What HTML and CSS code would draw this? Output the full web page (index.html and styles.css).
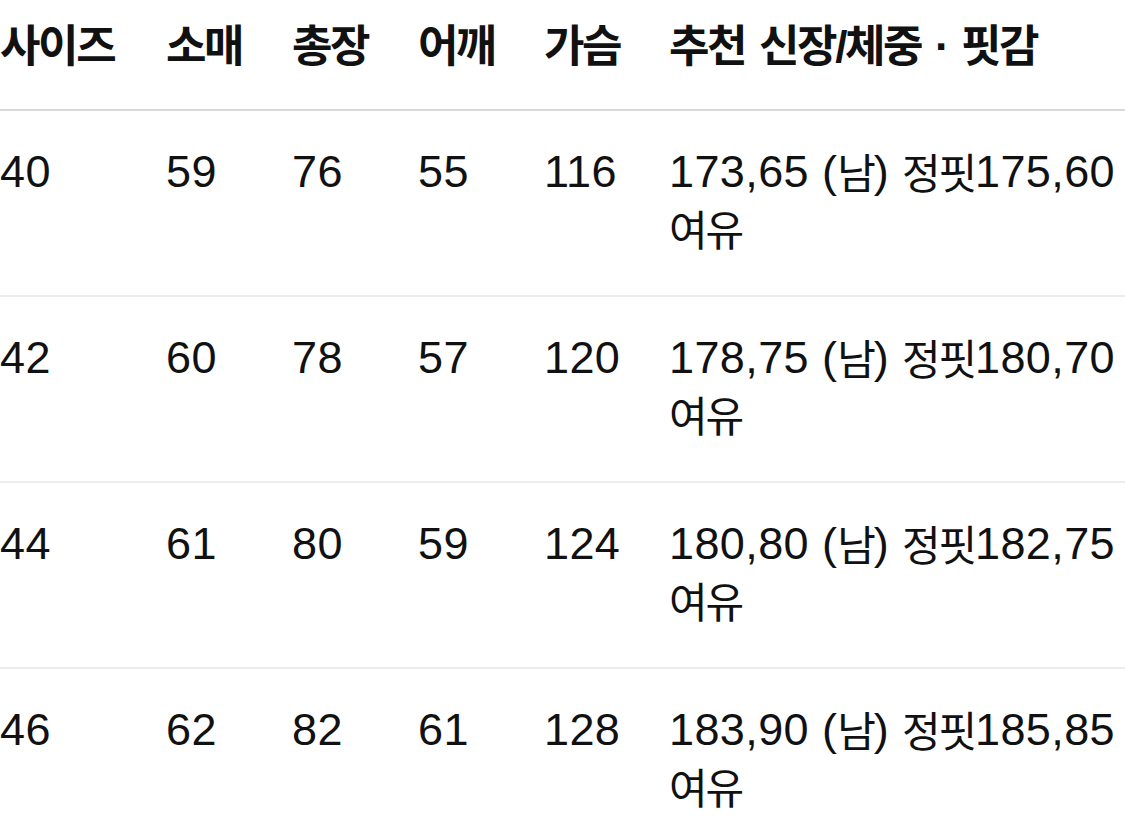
FILE: index.html
```html
<!DOCTYPE html>
<html lang="ko">
<head>
<meta charset="utf-8">
<title>사이즈표</title>
<link rel="stylesheet" href="styles.css">
</head>
<body>
<table class="size-table">
  <colgroup>
    <col class="c-size">
    <col class="c-num">
    <col class="c-num">
    <col class="c-num">
    <col class="c-num2">
    <col class="c-rec">
  </colgroup>
  <thead>
    <tr>
      <th>사이즈</th>
      <th>소매</th>
      <th>총장</th>
      <th>어깨</th>
      <th>가슴</th>
      <th>추천 신장/체중 · 핏감</th>
    </tr>
  </thead>
  <tbody>
    <tr>
      <td>40</td><td>59</td><td>76</td><td>55</td><td>116</td>
      <td>173,65 (<span class="ko">남</span>) <span class="ko">정핏</span>175,60 <span class="ko">여유</span></td>
    </tr>
    <tr>
      <td>42</td><td>60</td><td>78</td><td>57</td><td>120</td>
      <td>178,75 (<span class="ko">남</span>) <span class="ko">정핏</span>180,70 <span class="ko">여유</span></td>
    </tr>
    <tr>
      <td>44</td><td>61</td><td>80</td><td>59</td><td>124</td>
      <td>180,80 (<span class="ko">남</span>) <span class="ko">정핏</span>182,75 <span class="ko">여유</span></td>
    </tr>
    <tr>
      <td>46</td><td>62</td><td>82</td><td>61</td><td>128</td>
      <td>183,90 (<span class="ko">남</span>) <span class="ko">정핏</span>185,85 <span class="ko">여유</span></td>
    </tr>
  </tbody>
</table>
</body>
</html>
```

FILE: styles.css
```css
html, body {
  margin: 0;
  padding: 0;
  background: #ffffff;
}

body {
  font-family: "Liberation Sans", "Noto Sans CJK KR", sans-serif;
  color: #111111;
  overflow: hidden;
}

.size-table {
  width: 1125px;
  border-collapse: collapse;
  table-layout: fixed;
  font-size: 45px;
  line-height: 57px;
}

.c-size { width: 166px; }
.c-num { width: 126px; }
.c-num2 { width: 125px; }
.c-rec { width: auto; }

.size-table th {
  text-align: left;
  font-weight: 600;
  font-size: 44px;
  letter-spacing: -2.4px;
  word-spacing: 4px;
  padding: 18px 0 34px 0;
  border-bottom: 2px solid #d9d9d9;
  white-space: nowrap;
}

.size-table td {
  text-align: left;
  vertical-align: top;
  font-weight: 400;
  letter-spacing: 0.4px;
  padding: 32px 0 38px 0;
  border-bottom: 2px solid #ececec;
}

.size-table tbody tr:last-child td {
  border-bottom: none;
}

.ko {
  font-size: 42px;
  line-height: 42px;
  letter-spacing: -2.2px;
  vertical-align: -2px;
}
```
